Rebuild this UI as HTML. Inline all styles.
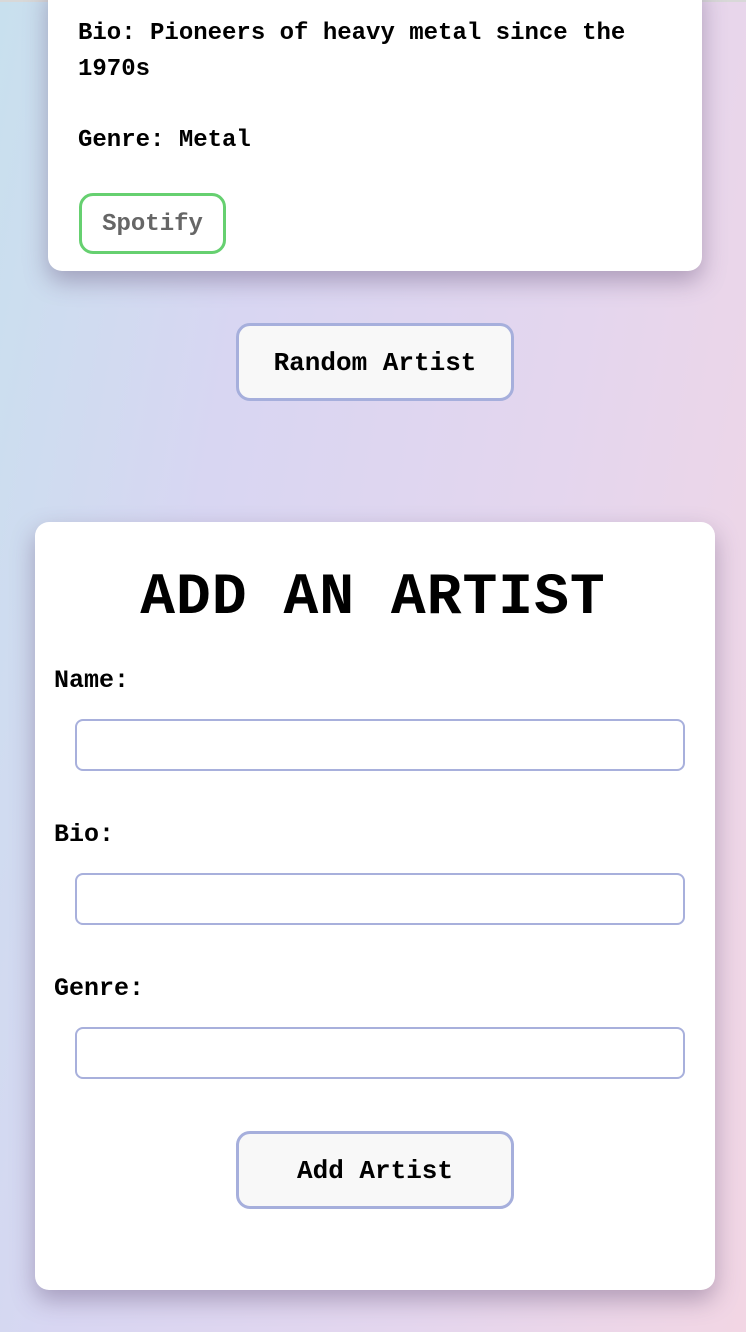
<!DOCTYPE html>
<html><head><style>
html,body{margin:0;padding:0}
body{width:746px;height:1332px;position:relative;overflow:hidden;
background:linear-gradient(100deg,#c8e0ee 0%,#d8d6f2 30%,#e4d6ee 65%,#f2d6e4 100%);
font-family:"Liberation Mono",monospace;font-weight:bold;color:#000}
.topline{position:absolute;left:0;top:0;width:746px;height:2px;background:#d8d8d8}
.card{position:absolute;background:#fff;border-radius:14px;box-shadow:0 10px 24px rgba(90,70,110,.4)}
.t{position:absolute;font-size:24px;line-height:36px;white-space:nowrap}
.btn{position:absolute;box-sizing:border-box;background:#f8f8f8;border:3px solid #a6afdc;border-radius:14px;font-size:26px;text-align:center}
.inp{position:absolute;left:75px;width:610px;height:52px;box-sizing:border-box;border:2px solid #a8b0dc;border-radius:8px;background:#fff}
</style></head><body>
<div class="topline"></div>
<div class="card" style="left:48px;top:-20px;width:654px;height:291px"></div>
<div class="t" style="left:78px;top:16px">Bio: Pioneers of heavy metal since the</div>
<div class="t" style="left:78px;top:52px">1970s</div>
<div class="t" style="left:78px;top:123px">Genre: Metal</div>
<div style="position:absolute;left:79px;top:193px;width:147px;height:61px;box-sizing:border-box;border:3px solid #66d070;border-radius:14px;color:#666;font-size:24px;line-height:57px;text-align:center">Spotify</div>
<div class="btn" style="left:236px;top:323px;width:278px;height:78px;line-height:74px">Random Artist</div>
<div class="card" style="left:35px;top:522px;width:680px;height:768px"></div>
<div style="position:absolute;left:0;width:746px;top:571px;text-align:center;font-size:58px;line-height:56px;letter-spacing:1px;font-weight:bold">ADD AN ARTIST</div>
<div class="t" style="left:54px;top:663px;font-size:25px">Name:</div>
<div class="inp" style="top:719px"></div>
<div class="t" style="left:54px;top:817px;font-size:25px">Bio:</div>
<div class="inp" style="top:873px"></div>
<div class="t" style="left:54px;top:971px;font-size:25px">Genre:</div>
<div class="inp" style="top:1027px"></div>
<div class="btn" style="left:236px;top:1131px;width:278px;height:78px;line-height:74px">Add Artist</div>
</body></html>
